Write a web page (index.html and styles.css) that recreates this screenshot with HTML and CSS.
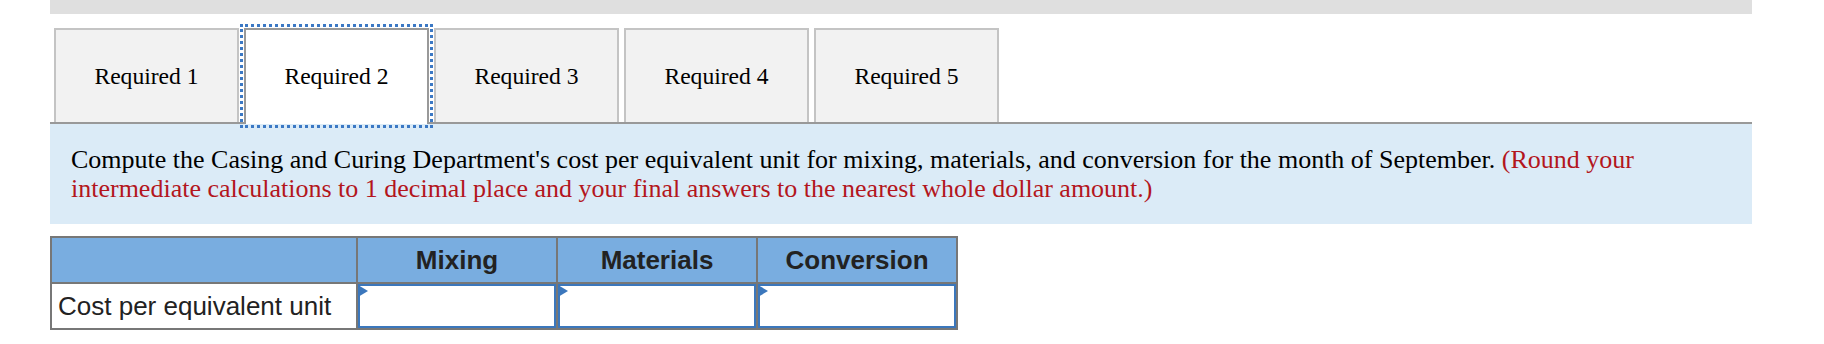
FILE: index.html
```html
<!DOCTYPE html>
<html lang="en">
<head>
    <meta charset="UTF-8">
    <title>Required 2</title>
    <link rel="stylesheet" href="styles.css">
</head>
<body>
    <div class="page">
        <div class="topbar"></div>

        <!-- Tabs -->
        <div class="tabs">
            <div class="tab">Required 1</div>
            <div class="tab active">Required 2</div>
            <div class="tab">Required 3</div>
            <div class="tab">Required 4</div>
            <div class="tab">Required 5</div>
        </div>

        <div class="question">
            <p>Compute the Casing and Curing Department's cost per equivalent unit for mixing, materials, and conversion for the month of September. <span class="hint">(Round your intermediate calculations to 1 decimal place and your final answers to the nearest whole dollar amount.)</span></p>
        </div>

        <!-- Answer table -->
        <table class="answer">
            <tr>
                <th class="label-col"></th>
                <th>Mixing</th>
                <th>Materials</th>
                <th>Conversion</th>
            </tr>
            <tr>
                <td class="label">Cost per equivalent unit</td>
                <td class="entry"><input type="text"></td>
                <td class="entry"><input type="text"></td>
                <td class="entry"><input type="text"></td>
            </tr>
        </table>
    </div>
</body>
</html>
```

FILE: styles.css
```css
body {
    margin: 0;
    padding: 0;
    background-color: #ffffff;
    font-family: "Liberation Serif", "Times New Roman", serif;
}
.page {
    margin-left: 50px;
    width: 1702px;
}
.topbar {
    height: 14px;
    background-color: #dfdfdf;
}
.tabs {
    display: flex;
    gap: 5px;
    padding-left: 4px;
    margin-top: 14px;
    border-bottom: 2px solid #999999;
}
.tab {
    width: 185px;
    height: 94px;
    box-sizing: border-box;
    border: 2px solid #c4c4c4;
    border-bottom: none;
    background-color: #f2f2f2;
    display: flex;
    align-items: center;
    justify-content: center;
    font-size: 23.6px;
    color: #000000;
    cursor: pointer;
}
.tab.active {
    background-color: #ffffff;
    border-color: #999999;
    height: 96px;
    padding-bottom: 2px;
    margin-bottom: -2px;
    outline: 3px dotted #3b78c4;
    outline-offset: 1px;
}
.question {
    background-color: #dbebf7;
    padding: 21px 21px 21px;
}
.question p {
    margin: 0;
    font-size: 26px;
    line-height: 29px;
    color: #000000;
}
.question .hint {
    color: #b3161d;
}
.answer {
    margin-top: 12px;
    border-collapse: collapse;
    border: 2px solid #777777;
    font-family: "Liberation Sans", Arial, sans-serif;
    font-size: 26px;
    color: #222222;
}
.answer th,
.answer td {
    border: 2px solid #777777;
    padding: 0;
    height: 44px;
}
.answer th {
    background-color: #79ade0;
    font-weight: bold;
    width: 198px;
    text-align: center;
}
.answer th.label-col {
    width: 304px;
}
.answer td.label {
    padding-left: 6px;
    text-align: left;
}
.answer td.entry {
    position: relative;
    background-color: #ffffff;
}
.answer td.entry input {
    display: block;
    width: 100%;
    height: 44px;
    box-sizing: border-box;
    border: 2px solid #3b77bc;
    margin: 0;
    padding: 0 6px;
    font-size: 22px;
    background-color: #ffffff;
}
.answer td.entry::before {
    content: "";
    position: absolute;
    top: 1px;
    left: 0;
    border-left: 10px solid #3b77bc;
    border-top: 6px solid transparent;
    border-bottom: 6px solid transparent;
}
```
